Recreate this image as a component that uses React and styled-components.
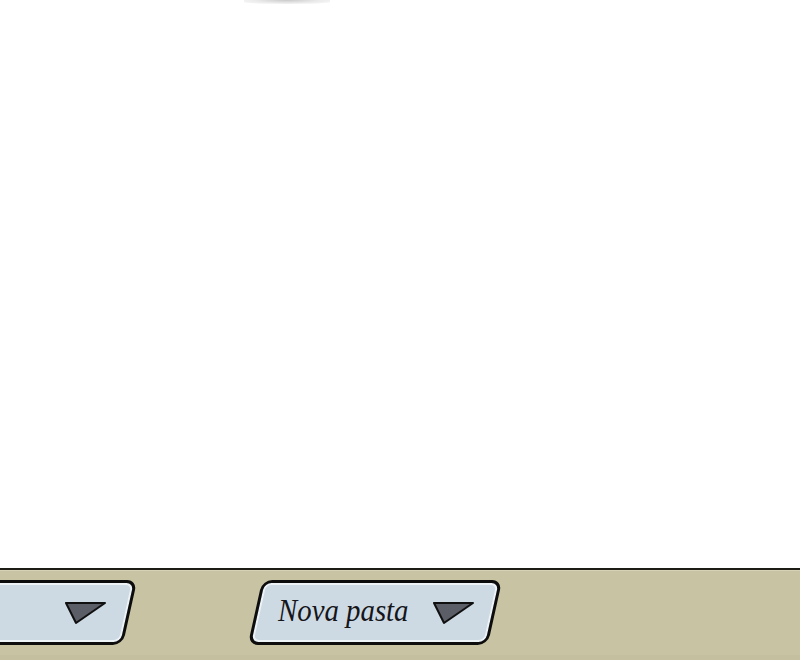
import React from "react";
import styled, { createGlobalStyle } from "styled-components";

const Global = createGlobalStyle`
  html, body {
    margin: 0;
    padding: 0;
    background: #ffffff;
  }
`;

const Screen = styled.div`
  width: 800px;
  height: 660px;
  display: flex;
  flex-direction: column;
  overflow: hidden;
`;

const Canvas = styled.div`
  flex: 1;
  background: #ffffff;
`;

const Smudge = styled.div`
  width: 86px;
  height: 4px;
  margin-left: 244px;
  border-radius: 0 0 50% 50%;
  background: radial-gradient(ellipse at 50% 0%, #c9c9c9 0%, #ececec 55%, #fbfbfb 100%);
`;

const Toolbar = styled.div`
  height: 92px;
  border-top: 2px solid #1d1d16;
  background: #c8c3a3;
  box-shadow: inset 0 1px 0 #d6d2b6, inset 0 -5px 0 #c3bf9f;
  display: flex;
  align-items: flex-start;
  gap: 125px;
  padding-top: 10px;
  box-sizing: border-box;
`;

const DropButton = styled.div`
  position: relative;
  isolation: isolate;
  flex: none;
  width: 240px;
  height: 65px;
  margin-left: ${(p) => p.$offset || 0}px;
  display: flex;
  align-items: center;
  justify-content: ${(p) => (p.$empty ? "flex-end" : "space-between")};
  padding: 0 ${(p) => (p.$empty ? 23 : 20)}px 0 23px;
  box-sizing: border-box;

  &::before {
    content: "";
    position: absolute;
    inset: 0;
    z-index: -1;
    background: #cddae4;
    border: 3px solid #0d0d0d;
    border-radius: 10px;
    box-shadow: inset 0 0 0 2px #eef3f7;
    transform: skewX(-12.5deg);
  }
`;

const Label = styled.span`
  font-family: "Liberation Serif", "Times New Roman", serif;
  font-style: italic;
  font-size: 31px;
  color: #15151a;
  display: inline-block;
  transform: scaleX(0.93);
  transform-origin: left center;
  margin-top: -3px;
`;

const Arrow = () => (
  <svg width="42" height="24" viewBox="0 0 42 24">
    <polygon
      points="1,2 40,2 11,22"
      fill="#5b5d67"
      stroke="#101010"
      strokeWidth="2"
      strokeLinejoin="round"
    />
  </svg>
);

export default function App() {
  return (
    <>
      <Global />
      <Screen>
        <Canvas>
          <Smudge />
        </Canvas>
        <Toolbar>
          <DropButton $offset={-110} $empty>
            <Arrow />
          </DropButton>
          <DropButton>
            <Label>Nova pasta</Label>
            <Arrow />
          </DropButton>
        </Toolbar>
      </Screen>
    </>
  );
}
